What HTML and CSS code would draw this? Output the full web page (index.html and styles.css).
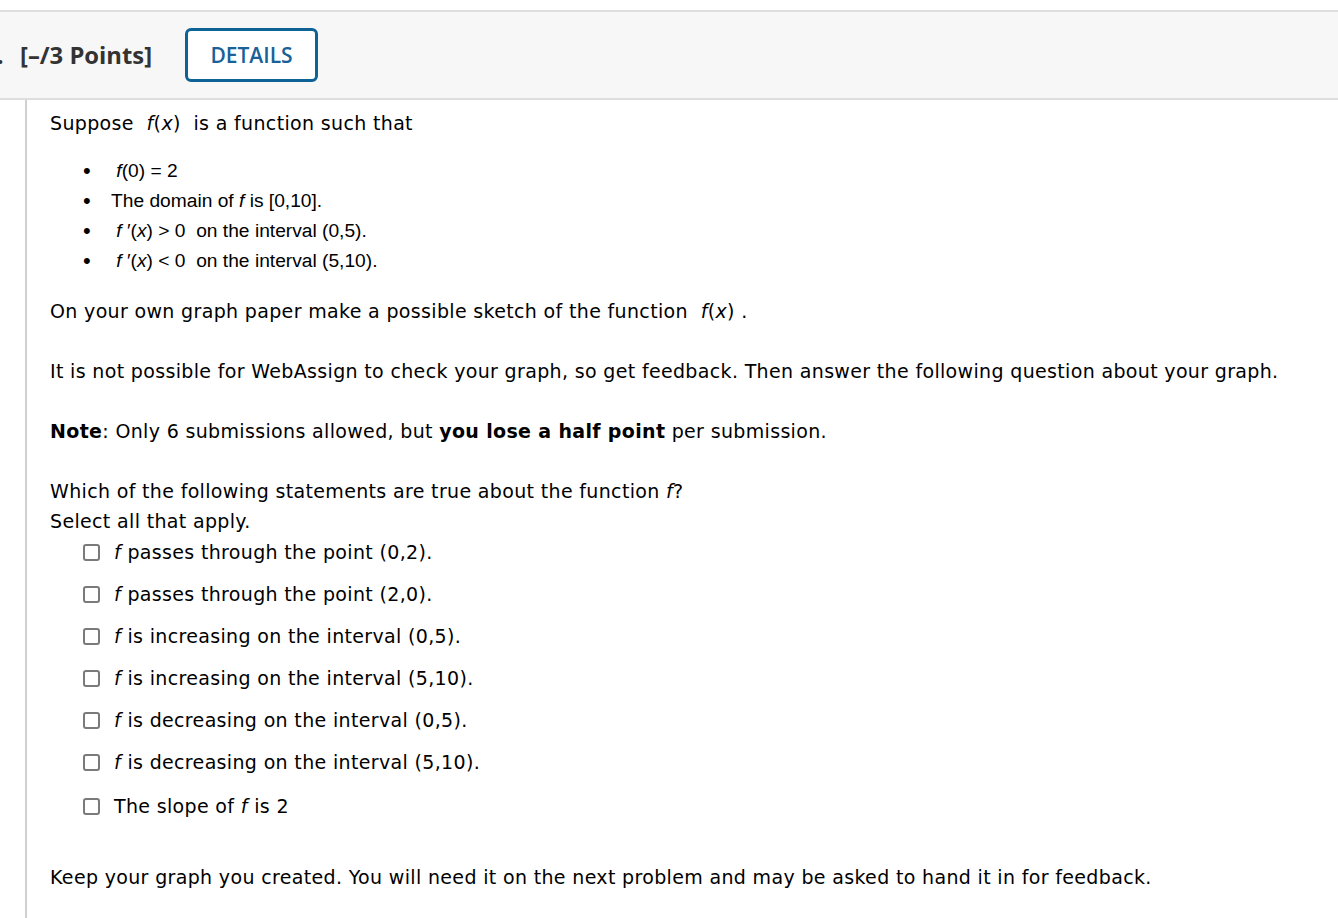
FILE: index.html
```html
<!DOCTYPE html>
<html>
<head>
<meta charset="utf-8">
<link rel="stylesheet" href="styles.css">
</head>
<body>
<div class="page">
  <div class="qhead">
    <span class="qnum">.</span>
    <span class="points">[–/3 Points]</span>
    <button class="details">DETAILS</button>
  </div>
  <div class="qbody">
    <p class="para first">Suppose&nbsp; <i>f</i>(<i>x</i>)&nbsp; is a function such that</p>
    <ul class="conds">
      <li>&nbsp;<i>f</i>(0) = 2</li>
      <li>The domain of <i>f</i> is [0,10].</li>
      <li>&nbsp;<i>f</i> ′(<i>x</i>) &gt; 0&nbsp; on the interval (0,5).</li>
      <li>&nbsp;<i>f</i> ′(<i>x</i>) &lt; 0&nbsp; on the interval (5,10).</li>
    </ul>
    <p class="para">On your own graph paper make a possible sketch of the function&nbsp; <i>f</i>(<i>x</i>) .</p>
    <p class="para gap">It is not possible for WebAssign to check your graph, so get feedback. Then answer the following question about your graph.</p>
    <p class="para gap"><b>Note</b>: Only 6 submissions allowed, but <b>you lose a half point</b> per submission.</p>
    <p class="para gap">Which of the following statements are true about the function <i>f</i>?<br>Select all that apply.</p>
    <div class="options">
      <label class="opt"><span class="box"></span><span><i>f</i> passes through the point (0,2).</span></label>
      <label class="opt"><span class="box"></span><span><i>f</i> passes through the point (2,0).</span></label>
      <label class="opt"><span class="box"></span><span><i>f</i> is increasing on the interval (0,5).</span></label>
      <label class="opt"><span class="box"></span><span><i>f</i> is increasing on the interval (5,10).</span></label>
      <label class="opt"><span class="box"></span><span><i>f</i> is decreasing on the interval (0,5).</span></label>
      <label class="opt"><span class="box"></span><span><i>f</i> is decreasing on the interval (5,10).</span></label>
      <label class="opt last"><span class="box"></span><span>The slope of <i>f</i> is 2</span></label>
    </div>
    <p class="para keep">Keep your graph you created. You will need it on the next problem and may be asked to hand it in for feedback.</p>
  </div>
</div>
</body>
</html>
```
FILE: styles.css
```css
html, body {
  margin: 0;
  padding: 0;
  background: #ffffff;
}
.page {
  padding-top: 10px;
  width: 1338px;
  height: 908px;
  overflow: hidden;
}
.qhead {
  display: flex;
  align-items: center;
  height: 86px;
  background: #f7f7f7;
  border-top: 2px solid #dedede;
  border-bottom: 2px solid #dedede;
  font-family: "Open Sans", sans-serif;
}
.qnum {
  font-weight: 700;
  font-size: 23px;
  color: #333;
  margin-left: -3px;
  width: 23px;
}
.points {
  font-weight: 700;
  font-size: 23.8px;
  color: #333333;
}
.details {
  margin-left: 33px;
  width: 133px;
  height: 54px;
  box-sizing: border-box;
  border: 3px solid #0f6296;
  border-radius: 6px;
  background: #ffffff;
  color: #1a6197;
  font-family: "Open Sans", sans-serif;
  font-weight: 600;
  font-size: 21px;
  padding: 0;
}
.qbody {
  margin-left: 25px;
  border-left: 2px solid #d0d0d0;
  padding-left: 23px;
  padding-top: 8px;
  min-height: 900px;
  font-family: "DejaVu Sans", Verdana, sans-serif;
  font-size: 19px;
  letter-spacing: 0.34px;
  color: #000;
}
.para {
  margin: 0;
  line-height: 30px;
}
.para.gap {
  margin-top: 30px;
}
.conds {
  margin: 18px 0 20px 0;
  padding-left: 33px;
  list-style: none;
  font-family: "Liberation Sans", Arial, sans-serif;
  font-size: 19.2px;
  letter-spacing: 0;
  line-height: 30px;
}
.conds li::before {
  content: "•";
  display: inline-block;
  width: 28px;
  font-size: 22px;
  vertical-align: top;
}
.options {
  margin-top: 0;
  padding-left: 33px;
}
.opt {
  display: flex;
  align-items: center;
  height: 42px;
  line-height: 30px;
  margin-top: -11px;
  margin-bottom: 11px;
}
.opt:first-child {
  margin-top: -5px;
}
.opt.last {
  margin-top: -9px;
}
.box {
  width: 13px;
  height: 13px;
  border: 2px solid #7a7a7a;
  border-radius: 3px;
  margin-right: 14px;
  flex: none;
}
.keep {
  margin-top: 35px;
}
```
